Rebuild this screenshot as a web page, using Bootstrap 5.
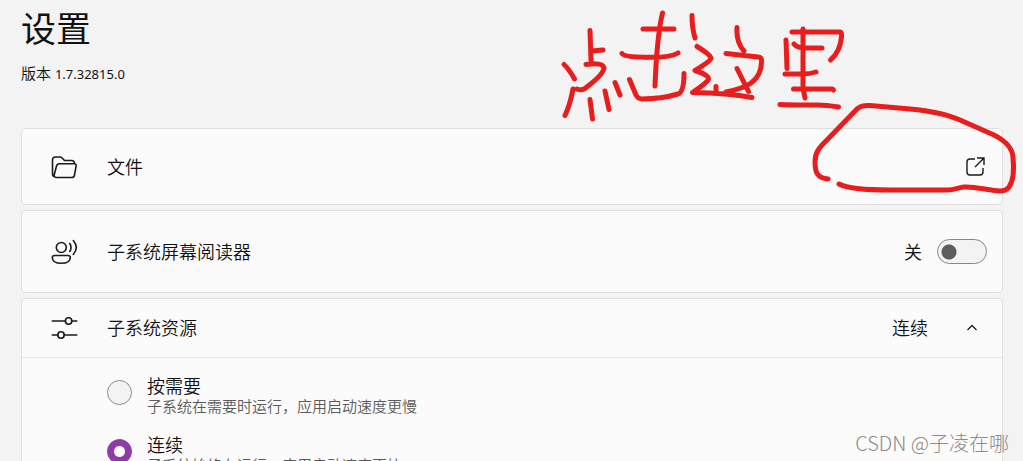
<!DOCTYPE html>
<html lang="zh-CN">
<head>
<meta charset="utf-8">
<meta name="viewport" content="width=device-width, initial-scale=1">
<title>设置</title>
<link href="https://cdn.jsdelivr.net/npm/bootstrap@5.3.0/dist/css/bootstrap.min.css" rel="stylesheet">
<style>
  body { background: #f3f3f3; color: #111; font-family: "Open Sans", "Noto Sans CJK SC", sans-serif; font-size: 18px; line-height: 24px; font-weight: 350; }
  .page { padding: 3px 20px 0 21px; }
  .page-title { font-family: "Noto Sans CJK SC", sans-serif; font-size: 35px; line-height: 48px; font-weight: 400; }
  .version { font-size: 15px; line-height: 20px; padding-top: 12px; margin-bottom: 44px; }
  .version span { font-family: "Noto Sans", sans-serif; font-size: 13px; font-weight: 400; }
  .setting, .setting-group { background: #fbfbfb; border: 1px solid #dfdfdf; border-radius: 5px; }
  .setting, .group-head { padding: 0 15px 0 29px; color: inherit; font-weight: inherit; }
  .setting-file { height: 77px; }
  .setting-reader { height: 83px; }
  .group-head { height: 59px; background: none; border: 0; border-bottom: 1px solid #e5e5e5; }
  .stack { gap: 5px; }
  .glyph { width: 28px; height: 28px; margin-right: 28px; fill: none; stroke: #1b1b1b; stroke-width: 1.6; stroke-linecap: round; stroke-linejoin: round; }
  .open-icon { width: 22px; height: 22px; fill: none; stroke: #1b1b1b; stroke-width: 1.4; }
  .chevron { width: 30px; height: 20px; margin-left: 29px; fill: none; stroke: #1b1b1b; stroke-width: 1.3; }
  .form-check-input.toggle { width: 50px; height: 25px; margin: 0 0 0 15px; background-color: #f3f3f3; border: 1px solid #868686; border-radius: 13px;
    background-image: radial-gradient(circle at 11px 12px, #5d5d5d 7px, transparent 8px); background-size: auto; background-position: 0 0; }
  .options { padding: 17px 15px 0 85px; gap: 19px; }
  .form-check-input.choice { width: 25px; height: 25px; margin: 5px 15px 0 0; background-color: #f3f3f3; border: 1px solid #8b8b8b; }
  .form-check-input.choice:checked { background-color: #8e3aa8; border-color: #8e3aa8; background-image: radial-gradient(circle, #fff 5px, transparent 6px); background-size: auto; }
  .choice-title { line-height: 22px; }
  .choice-note { font-size: 15px; line-height: 18px; color: #5a5a5a; }
  .pen { fill: none; stroke: #e91d1d; stroke-width: 5; stroke-linecap: round; stroke-linejoin: round; pointer-events: none; }
  .watermark { right: 14px; bottom: 4px; font-family: "Noto Sans CJK SC", sans-serif; font-size: 20px; line-height: 28px; font-weight: 300; color: #8b8b8b; }
</style>
</head>
<body class="position-relative vh-100 overflow-hidden">
<main class="page">
  <h1 class="page-title mb-0">设置</h1>
  <p class="version">版本 <span>1.7.32815.0</span></p>
  <div class="stack d-flex flex-column">
    <a href="#files" class="setting setting-file d-flex align-items-center text-decoration-none">
      <svg class="glyph" viewBox="0.5 0 28 28" aria-hidden="true"><path d="M4.500 24C2.500 23.500 2 22.500 2 21V7C2 5 3.500 4 5 4H9.500C10.500 4 11 4.300 11.600 5L14 7.500H21C23 7.500 24 8.700 24 10.500M4.500 24Q3.300 23.700 3.800 21.500L6 13Q6.700 10.700 9 10.700H23.500Q26 10.700 25.600 13.200L24 22Q23.600 24.500 21.300 24.500H6Q5 24.500 4.500 24Z"/></svg>
      <span class="flex-grow-1">文件</span>
      <svg class="open-icon" viewBox="0 0 22 22" aria-hidden="true"><path d="M10 3H5Q2 3 2 6V16Q2 19 5 19H15Q18 19 18 16V12M12 2H19V9M19 2L10 11"/></svg>
    </a>
    <div class="setting setting-reader d-flex align-items-center">
      <svg class="glyph" viewBox="0.7 1 28 28" aria-hidden="true"><circle cx="11" cy="10.500" r="5"/><path d="M4.500 18.500H17.500Q20 18.500 20 20.500C20 24.500 16 26.300 11 26.300S2 24.500 2 20.500Q2 18.500 4.500 18.500ZM19.500 6.500Q22 10.500 19.500 14.500M23 3.500Q29 10.500 23 17.500"/></svg>
      <label class="flex-grow-1" for="reader">子系统屏幕阅读器</label>
      <span>关</span>
      <div class="form-switch p-0 d-flex"><input class="form-check-input toggle" type="checkbox" role="switch" id="reader"></div>
    </div>
    <section class="setting-group">
      <button type="button" class="group-head d-flex align-items-center w-100 text-start" aria-expanded="true" aria-controls="resources">
        <svg class="glyph" viewBox="0.7 0 28 28" aria-hidden="true"><path d="M2 7H15M21.500 7H26.500M2 21H7.500M14 21H26.500"/><circle cx="18.300" cy="7" r="3.200"/><circle cx="10.700" cy="21" r="3.200"/></svg>
        <span class="flex-grow-1">子系统资源</span>
        <span>连续</span>
        <svg class="chevron" viewBox="0 0 30 20" aria-hidden="true"><path d="M10.500 12L15 7.500L19.500 12"/></svg>
      </button>
      <div id="resources" class="options d-flex flex-column">
        <div class="d-flex">
          <input class="form-check-input choice flex-shrink-0" type="radio" name="mode" id="on-demand">
          <label for="on-demand"><span class="choice-title d-block">按需要</span><span class="choice-note d-block">子系统在需要时运行，应用启动速度更慢</span></label>
        </div>
        <div class="d-flex">
          <input class="form-check-input choice flex-shrink-0" type="radio" name="mode" id="continuous" checked>
          <label for="continuous"><span class="choice-title d-block">连续</span><span class="choice-note d-block">子系统始终在运行，应用启动速度更快</span></label>
        </div>
      </div>
    </section>
  </div>
</main>
<!-- Red pen note and ring around the open button -->
<svg class="pen position-absolute top-0 end-0" width="473" height="210" viewBox="550 0 473 210" role="img" aria-label="点击这里">
  <path d="M590 30.500L591 60M591 51L603 50M586 64.500Q603 62 604 68C603 76 589 85 584 89Q581 90.500 577 89M564 64.500Q569 69 574.500 79M573 89C571 100 569 107 565 115.500M590 99.500L592.500 119M605 91L609 109.500M615 82.500L620 95"/>
  <path d="M662.500 13C658 32 656 60 655 86M643 29H674M622 53.500Q624 57 645 57.200Q670 58 678 53M629.500 79.500L636 95Q638 99 642 99Q661 99 678 94Q684 92 684 73.500"/>
  <path d="M692 15.500Q692 28 695 38M697 46.500Q711 55 711 58.500Q711 61 695 70.500Q709 75 708.500 79Q708 82 692.500 92.500Q728 93 752 97.500M737 27.500Q736 42 744 51M726 53.500L758 57Q762 57 761.500 62C761 82 746 88 726 92M737 68.500L748.500 91.500M716 86.500V92"/>
  <path d="M786 40L787 68.500M792 32H840Q842 32 841.500 37Q840 52 830.500 60M803 29V88L805 98M794 44Q797 48 806 48H822M785 74H802Q810 74 816 72M793.500 89H832.500L833.500 90M780 104.500Q786 105 817 105Q826 105 838.500 107"/>
  <path d="M828 179C817 178 815 172 815 162C815 152 820 147 825 142L857 109Q861 105 870 105.500L910 109Q942 112 960 120L994 135C1008 142 1013 151 1013 158C1014 168 1014 180 1009 187Q1006 191 1000 191C990 191 975 186 964 187C956 188 955 190 948 190H890Q850 190 839 184"/>
</svg>
<div class="watermark position-absolute">CSDN @子凌在哪</div>
<script src="https://cdn.jsdelivr.net/npm/bootstrap@5.3.0/dist/js/bootstrap.bundle.min.js"></script>
</body>
</html>
